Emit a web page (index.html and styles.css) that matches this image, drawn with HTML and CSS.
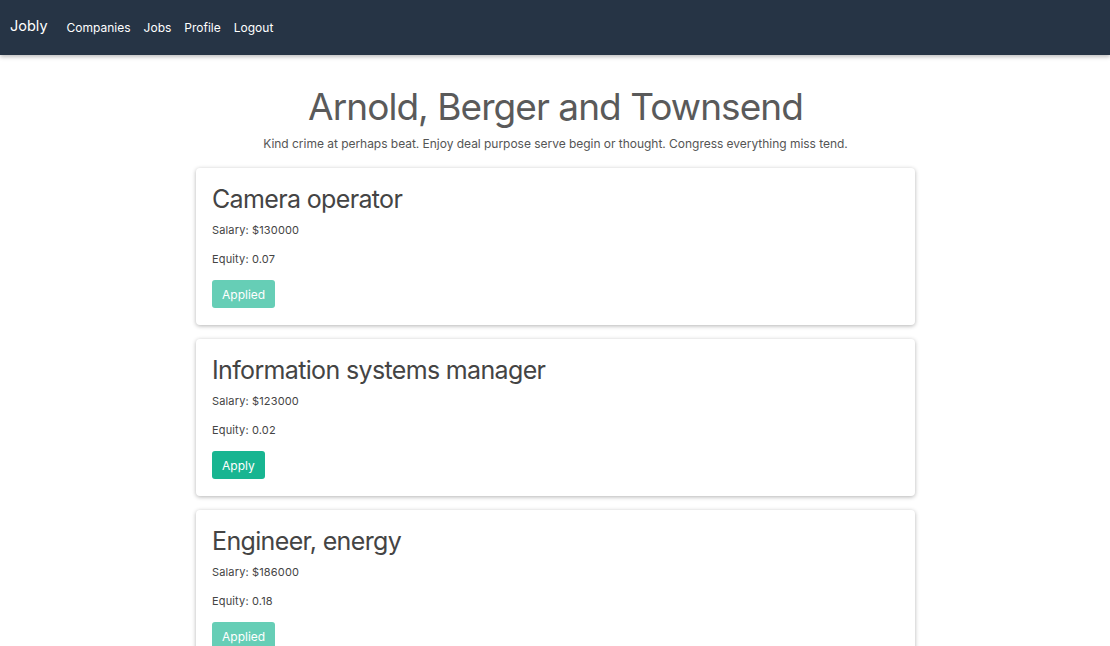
FILE: index.html
```html
<!DOCTYPE html>
<html lang="en">
<head>
<meta charset="utf-8">
<title>Jobly</title>
<link rel="stylesheet" href="styles.css">
</head>
<body>
<nav class="navbar">
  <a class="brand" href="#">Jobly</a>
  <ul class="nav-links">
    <li><a href="#">Companies</a></li>
    <li><a href="#">Jobs</a></li>
    <li><a href="#">Profile</a></li>
    <li><a href="#">Logout</a></li>
  </ul>
</nav>
<main class="container">
  <h1 class="company-name">Arnold, Berger and Townsend</h1>
  <p class="company-desc">Kind crime at perhaps beat. Enjoy deal purpose serve begin or thought. Congress everything miss tend.</p>
  <div class="job-list">
    <div class="card">
      <h2 class="job-title">Camera operator</h2>
      <p class="job-detail">Salary: $130000</p>
      <p class="job-detail">Equity: 0.07</p>
      <button class="btn btn-applied">Applied</button>
    </div>
    <div class="card">
      <h2 class="job-title">Information systems manager</h2>
      <p class="job-detail">Salary: $123000</p>
      <p class="job-detail">Equity: 0.02</p>
      <button class="btn btn-apply">Apply</button>
    </div>
    <div class="card">
      <h2 class="job-title">Engineer, energy</h2>
      <p class="job-detail">Salary: $186000</p>
      <p class="job-detail">Equity: 0.18</p>
      <button class="btn btn-applied">Applied</button>
    </div>
  </div>
</main>
</body>
</html>
```
FILE: styles.css
```css
* { box-sizing: border-box; }
html, body { margin: 0; padding: 0; }
body {
  font-family: Inter, "Noto Sans", sans-serif;
  background: #ffffff;
  color: #444;
}
.navbar {
  height: 55px;
  background: #263445;
  display: flex;
  align-items: center;
  padding: 0 10px 4px;
  box-shadow: 0 2px 4px rgba(0,0,0,0.25);
  position: relative;
  z-index: 1;
}
.brand {
  color: #fff;
  font-size: 14.5px;
  text-decoration: none;
  margin-right: 19px;
}
.nav-links {
  list-style: none;
  display: flex;
  gap: 13px;
  margin: 0;
  padding: 0;
}
.nav-links a {
  color: #fff;
  text-decoration: none;
  font-size: 12px;
}
.container {
  width: 720px;
  margin: 0 auto;
  padding-top: 30px;
  padding-left: 1px;
}
.company-name {
  text-align: center;
  font-size: 37px;
  font-weight: 400;
  letter-spacing: -0.95px;
  line-height: 1.2;
  color: #5a5a5a;
  margin: 0 0 6px;
}
.company-desc {
  text-align: center;
  font-size: 12px;
  letter-spacing: -0.03px;
  line-height: 18px;
  color: #555;
  margin: 0 0 15px;
}
.job-list {
  display: flex;
  flex-direction: column;
  gap: 14px;
}
.card {
  background: #fff;
  border-radius: 4px;
  padding: 16px 16px 17px;
  box-shadow: 0 1px 4px rgba(0,0,0,0.3);
}
.job-title {
  font-size: 25px;
  font-weight: 400;
  letter-spacing: -0.65px;
  line-height: 31px;
  color: #444;
  margin: 0 0 7px;
}
.job-detail {
  font-size: 11px;
  letter-spacing: 0.15px;
  line-height: 16px;
  color: #444;
  margin: 0 0 13px;
}
.btn {
  font-family: inherit;
  font-size: 12px;
  color: #fff;
  border: none;
  border-radius: 3px;
  height: 28px;
  padding: 0 10px;
  display: block;
}
.btn-apply { background: #18b591; }
.btn-applied { background: #66ceb6; }
```
